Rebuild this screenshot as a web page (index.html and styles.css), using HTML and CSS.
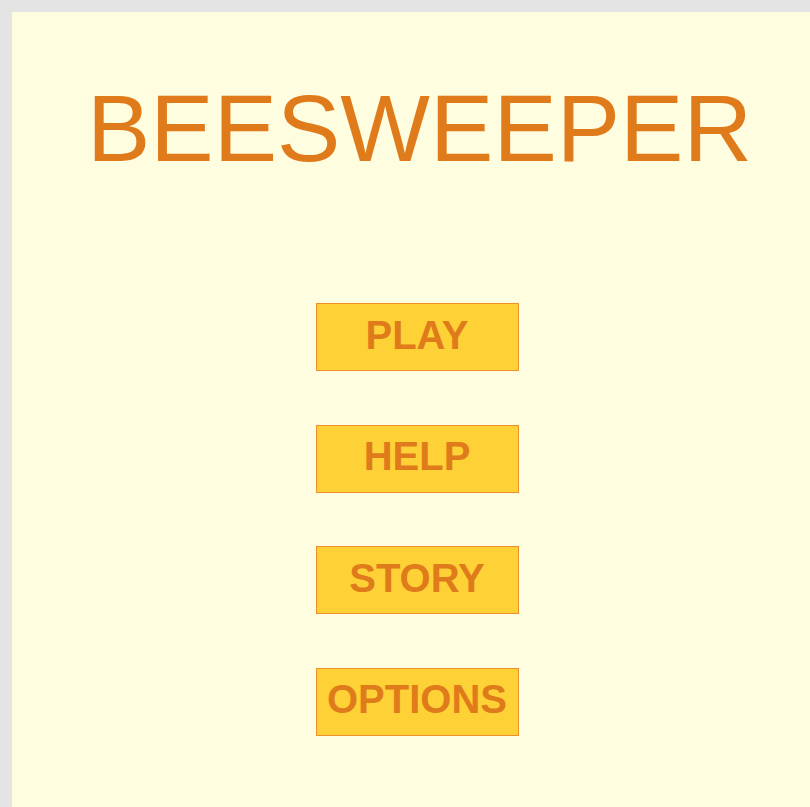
FILE: index.html
```html
<!DOCTYPE html>
<html>
<head>
<meta charset="utf-8">
<link rel="stylesheet" href="styles.css">
</head>
<body>
<div class="screen">
  <h1 class="title">BEESWEEPER</h1>
  <nav class="menu">
    <button class="btn">PLAY</button>
    <button class="btn">HELP</button>
    <button class="btn">STORY</button>
    <button class="btn">OPTIONS</button>
  </nav>
</div>
</body>
</html>
```
FILE: styles.css
```css
html, body {
  margin: 0;
  padding: 0;
}
body {
  background: #e4e4e4;
  padding: 12px 0 0 12px;
  overflow: hidden;
  height: 807px;
  box-sizing: border-box;
}
.screen {
  width: 810px;
  height: 795px;
  background: #fffde0;
  font-family: "Liberation Sans", Arial, sans-serif;
  display: flex;
  flex-direction: column;
  align-items: center;
}
.title {
  margin: 61px 0 0 5px;
  font-size: 95px;
  font-weight: normal;
  line-height: 110px;
  color: #e07b1c;
}
.menu {
  margin-top: 120px;
  display: flex;
  flex-direction: column;
  align-items: center;
  gap: 53.67px;
}
.btn {
  width: 203px;
  height: 68px;
  box-sizing: border-box;
  background: #fed136;
  border: 1px solid #f0902a;
  color: #e07b1c;
  font-family: "Liberation Sans", Arial, sans-serif;
  font-size: 40px;
  font-weight: bold;
  padding: 0 0 5px 0;
  line-height: 1;
}
```
